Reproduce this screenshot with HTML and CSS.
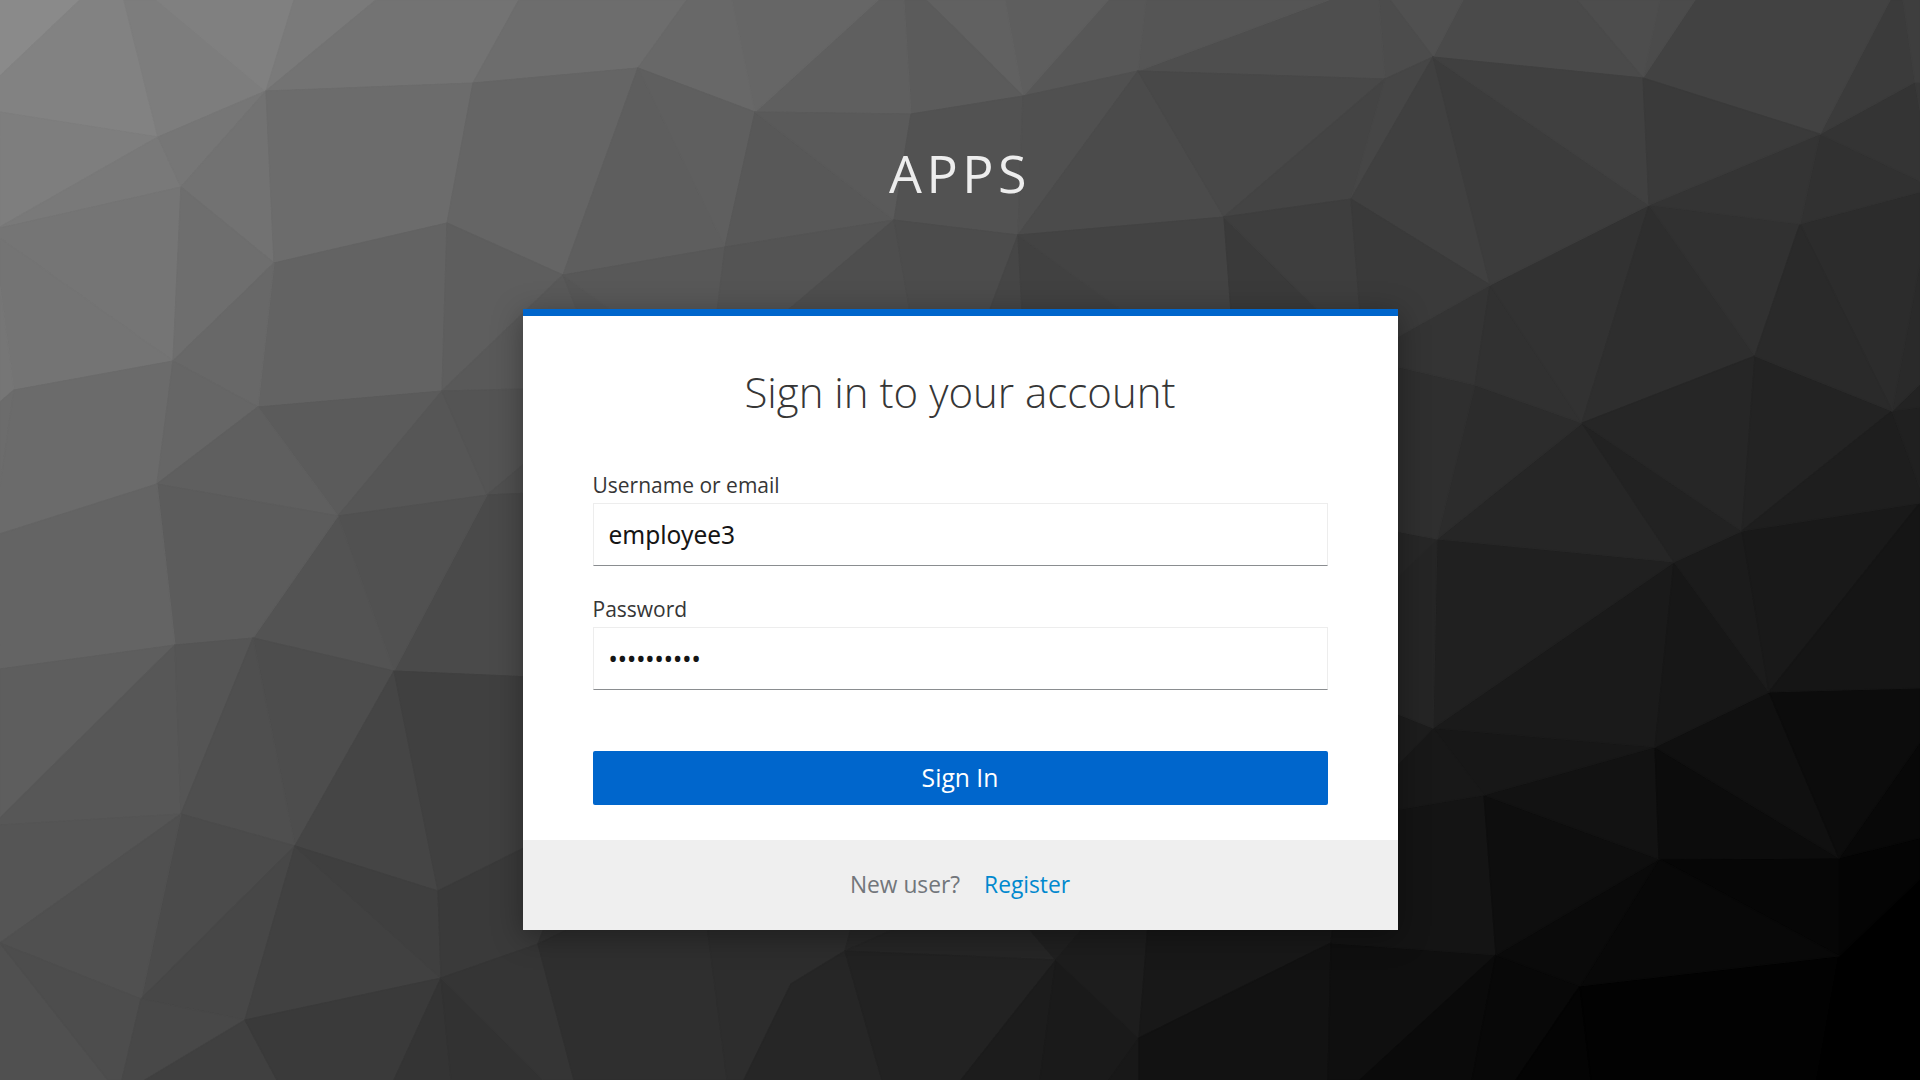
FILE: index.html
```html
<!DOCTYPE html>
<html lang="en">
<head>
<meta charset="utf-8">
<title>Sign in to Apps</title>
<link rel="stylesheet" href="styles.css">
</head>
<body>
<svg class="backdrop" viewBox="0 0 1920 1080" preserveAspectRatio="xMidYMid slice" aria-hidden="true"></svg>
<div class="login">
  <header class="brand">Apps</header>
  <main class="card">
    <h1 class="card-title">Sign in to your account</h1>
    <form class="form">
      <div class="field">
        <label class="label" for="username">Username or email</label>
        <input class="input" id="username" type="text" value="employee3">
      </div>
      <div class="field">
        <label class="label" for="password">Password</label>
        <input class="input" id="password" type="password" value="employee33">
      </div>
      <button class="submit" type="button">Sign In</button>
    </form>
    <footer class="card-footer"><span>New user?</span><a class="link" href="#">Register</a></footer>
  </main>
</div>
<script src="backdrop.js"></script>
</body>
</html>
```
FILE: styles.css
```css
* {
  box-sizing: border-box;
}

body {
  margin: 0;
  height: 100vh;
  overflow: hidden;
  background: #333;
  font-family: "Open Sans", sans-serif;
}

.backdrop {
  position: absolute;
  inset: 0;
  width: 100%;
  height: 100%;
}

.backdrop polygon {
  stroke-width: 1.2;
  stroke-linejoin: round;
}

.login {
  position: relative;
  display: flex;
  flex-direction: column;
  align-items: center;
}

.brand {
  height: 309px;
  padding-top: 137px;
  font-size: 52px;
  line-height: 72px;
  letter-spacing: 4.5px;
  text-transform: uppercase;
  color: #ededed;
}

.card {
  width: 875px;
  height: 621px;
  display: flex;
  flex-direction: column;
  border-top: 7px solid #06c;
  background: #fff;
  box-shadow: 0 6px 28px rgba(3, 3, 3, 0.34);
}

.card-title {
  margin: 45px 0 0;
  font-size: 42px;
  font-weight: 300;
  line-height: 62px;
  text-align: center;
  color: #363636;
}

.form {
  display: flex;
  flex-direction: column;
  padding: 46px 70px 0;
}

.field {
  height: 124px;
}

.label {
  display: block;
  height: 34px;
  font-size: 21px;
  line-height: 32px;
  color: #363636;
}

.input {
  display: block;
  width: 100%;
  height: 63px;
  padding: 0 15px;
  border: 1px solid #ededed;
  border-bottom-color: #8a8d90;
  font-family: "Noto Sans", sans-serif;
  font-size: 24.5px;
  color: #151515;
  background: #fff;
}

.submit {
  height: 54px;
  margin-top: 34px;
  padding: 0 0 1px;
  border: 0;
  border-radius: 2px;
  font-family: inherit;
  font-size: 24.7px;
  color: #fff;
  background: #06c;
}

.card-footer {
  height: 90px;
  margin-top: auto;
  padding-bottom: 1px;
  display: flex;
  justify-content: center;
  align-items: center;
  gap: 24px;
  font-size: 22.75px;
  color: #72767b;
  background: #efefef;
}

.link {
  color: #0088ce;
  text-decoration: none;
}
```
FILE: backdrop.js
```js
// Each facet: grey level (hex), then its corner points.
const facets = `
8a 0,0 80,0 0,76
82 80,0 124,0 158,137 0,112 0,76
7d 124,0 157,0 266,91 158,137
80 157,0 294,0 266,91
7a 294,0 376,0 266,91
73 376,0 519,0 473,83 266,91
6d 519,0 687,0 638,68 473,83
7e 0,112 158,137 0,227
79 0,227 158,137 181,187 0,228
76 158,137 266,91 181,187
72 181,187 266,91 274,263
75 0,228 181,187 173,361 0,238
74 0,238 173,361 14,390 0,286
76 0,286 14,390 0,402
6c 0,402 14,390 0,487
6b 14,390 173,361 157,484 0,534 0,487
6e 181,187 274,263 173,361
6c 266,91 473,83 447,223 274,263
65 473,83 638,68 563,275 447,223
63 274,263 447,223 442,391 258,407
68 274,263 258,407 173,361
66 173,361 258,407 157,484
5e 447,223 563,275 442,391
59 563,275 578,312 530,312 530,389 442,391
5b 258,407 442,391 338,516
5f 258,407 338,516 157,484
56 442,391 487,495 338,516
54 442,391 530,389 530,459 487,495
50 487,495 530,459 530,493
4a 487,495 530,493 530,677 394,671
51 338,516 487,495 394,671
53 338,516 394,671 253,638
5c 157,484 338,516 253,638 175,645
64 0,534 157,484 175,645 0,669
5e 0,669 175,645 0,818
57 0,818 175,645 181,814 0,825
55 175,645 253,638 181,814
55 0,825 181,814 0,943
4d 253,638 394,671 295,846
4f 253,638 295,846 181,814
45 394,671 438,891 295,846
40 394,671 530,677 530,845 438,891
4b 181,814 295,846 141,999
50 0,943 181,814 141,999
47 295,846 245,1020 141,999
41 295,846 441,978 245,1020
3f 295,846 438,891 441,978
3a 438,891 530,845 545,930 538,944 441,978
50 0,943 108,1080 0,1080
4d 0,943 141,999 122,1080 108,1080
48 141,999 245,1020 145,1080 122,1080
40 245,1020 277,1080 145,1080
3a 245,1020 441,978 394,1080 277,1080
34 441,978 451,1080 394,1080
32 441,978 543,1080 451,1080
35 441,978 538,944 574,1080 543,1080
33 538,944 545,925 577,925
2f 538,944 577,925 707,925 727,1080 574,1080
2d 707,925 852,925 845,951 791,984 744,1080 727,1080
28 845,951 852,925 904,925
26 845,951 904,925 1026,925 1056,960
26 845,951 791,984 744,1080 882,1080
22 845,951 1056,960 961,1080 882,1080
1c 1056,960 1040,1080 961,1080
20 1026,925 1086,925 1056,960
1a 1056,960 1139,1038 1109,1080 1040,1080
1d 1056,960 1086,925 1148,925 1139,1038
18 1139,1038 1139,1080 1109,1080
18 1148,925 1333,925 1331,943 1139,1038
12 1139,1038 1331,943 1328,1080 1139,1080
0f 1331,943 1496,955 1360,1080 1328,1080
14 1333,925 1390,925 1390,811 1484,795 1496,955 1331,943
0a 1496,955 1472,1080 1360,1080
08 1496,955 1580,986 1516,1080 1472,1080
04 1580,986 1591,1080 1516,1080
02 1580,986 1839,956 1817,1080 1591,1080
00 1839,956 1920,1015 1920,1080 1817,1080
00 1839,956 1920,879 1920,1015
04 1839,858 1920,838 1920,879 1839,956
08 1839,858 1920,742 1920,838
06 1659,859 1839,858 1839,956
08 1659,859 1839,956 1580,986
0a 1659,859 1580,986 1496,955
0e 1484,795 1659,859 1496,955
12 1655,747 1659,859 1484,795
0c 1655,747 1839,858 1659,859
10 1769,692 1839,858 1655,747
0c 1769,692 1920,688 1920,742 1839,858
17 1433,728 1655,747 1484,795
18 1433,728 1484,795 1390,811 1390,772
1d 1390,711 1433,728 1390,772
1a 1674,562 1655,747 1433,728
17 1674,562 1769,692 1655,747
20 1437,539 1674,562 1433,728
25 1390,584 1437,539 1433,728 1390,711
27 1390,530 1437,539 1390,584
1b 1742,531 1769,692 1674,562
19 1742,531 1920,503 1769,692
15 1920,503 1920,688 1769,692
26 1582,423 1674,562 1437,539
22 1582,423 1742,531 1674,562
2c 1475,385 1582,423 1437,539
2f 1390,365 1475,385 1437,539 1390,530
34 1490,285 1475,385 1390,365 1390,341
31 1490,285 1582,423 1475,385
32 1649,205 1582,423 1490,285
2e 1649,205 1755,356 1582,423
31 1649,205 1800,224 1755,356
26 1755,356 1742,531 1582,423
23 1755,356 1892,411 1742,531
1e 1892,411 1920,488 1920,503 1742,531
20 1892,411 1920,407 1920,488
23 1892,411 1920,384 1920,407
2a 1892,411 1920,262 1920,384
2c 1800,224 1920,192 1920,262 1892,411
2a 1800,224 1892,411 1755,356
31 1820,134 1920,181 1920,192 1800,224
34 1820,134 1800,224 1649,205
34 1820,134 1915,82 1920,110 1920,181
38 1915,82 1920,82 1920,110
3b 1890,0 1903,0 1915,82 1820,134
3e 1903,0 1920,0 1920,82 1915,82
42 1695,0 1890,0 1820,134 1643,78
4b 1660,0 1695,0 1643,78
4d 1577,0 1660,0 1643,78
4a 1463,0 1577,0 1643,78 1433,57
50 1390,0 1463,0 1433,57
4c 1379,0 1390,0 1433,57 1385,79
4e 1329,0 1379,0 1385,79 1138,71
55 1146,0 1329,0 1138,71
57 1108,0 1146,0 1138,71 1023,96
5e 1005,0 1108,0 1023,96
61 926,0 1005,0 1023,96
5b 904,0 926,0 1023,96 911,114
5f 878,0 904,0 911,114 755,112
66 732,0 878,0 755,112
68 687,0 732,0 755,112 638,68
5e 638,68 725,247 563,275
5f 638,68 755,112 725,247
58 755,112 894,220 725,247
5a 755,112 911,114 894,220
52 911,114 1023,96 1018,235 894,220
50 1023,96 1138,71 1018,235
4b 1138,71 1224,217 1018,235
48 1138,71 1385,79 1224,217
44 1385,79 1351,199 1224,217
46 1385,79 1433,57 1351,199
40 1433,57 1490,285 1351,199
3c 1433,57 1649,205 1490,285
40 1433,57 1643,78 1649,205
3a 1643,78 1820,134 1649,205
56 563,275 614,312 578,312
58 563,275 725,247 717,312 614,312
54 725,247 894,220 786,312 717,312
4e 894,220 910,312 786,312
4c 894,220 1018,235 989,312 910,312
46 1018,235 1022,312 989,312
41 1018,235 1124,312 1022,312
43 1018,235 1224,217 1231,312 1124,312
3a 1224,217 1320,312 1231,312
3e 1224,217 1351,199 1360,312 1320,312
3a 1351,199 1490,285 1390,341 1390,312 1360,312
`;

const backdrop = document.querySelector('.backdrop');
for (const line of facets.trim().split('\n')) {
  const [level, ...points] = line.split(' ');
  const facet = document.createElementNS('http://www.w3.org/2000/svg', 'polygon');
  const colour = '#' + level.repeat(3);
  facet.setAttribute('points', points.join(' '));
  facet.setAttribute('fill', colour);
  facet.setAttribute('stroke', colour);
  backdrop.append(facet);
}
```
